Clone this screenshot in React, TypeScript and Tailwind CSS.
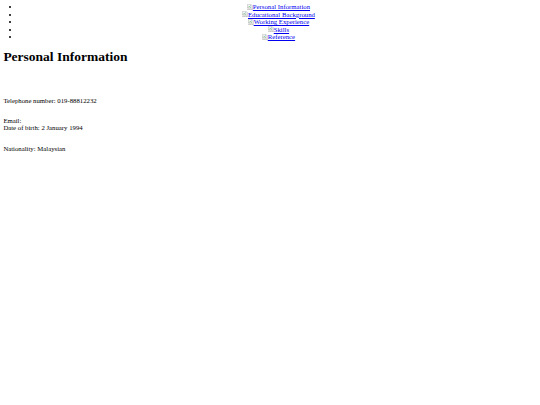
const navItems = [
  "Personal Information",
  "Educational Background",
  "Working Experience",
  "Skills",
  "Reference",
];

const BrokenImage = () => (
  <svg
    viewBox="0 0 16 16"
    className="inline-block w-[6px] h-[6px] align-[-0.5px]"
  >
    <path d="M1 1h10l4 4v4l-3 2-3-2-3 2-3-2-2 1z" fill="#f4f4f4" stroke="#9a9a9a" strokeWidth="1" />
    <path d="M1 13l2-1 3 2 3-2 3 2 3-2v3H1z" fill="#f4f4f4" stroke="#9a9a9a" strokeWidth="1" />
    <path d="M3 9l3-3 3 3 2-2" fill="none" stroke="#4caf50" strokeWidth="1.5" />
    <circle cx="10" cy="4.5" r="1.2" fill="#4a90d9" />
  </svg>
);

export default function App() {
  return (
    <div className="min-h-[405px] bg-white text-black p-[3.375px] font-['Liberation_Serif',_'Times_New_Roman',_serif] text-[6.75px] leading-[7.75px]">
      <ul className="list-disc pl-[16.875px] text-center">
        {navItems.map((item) => (
          <li key={item} className="h-[7.5px] leading-[7.5px]">
            <a href="#" className="text-[#0000EE] underline">
              <BrokenImage />
              {item}
            </a>
          </li>
        ))}
      </ul>

      <h1 className="font-bold text-[13.5px] leading-[15.5px] mt-[8.5px] mb-[9px]">
        Personal Information
      </h1>

      <div className="mt-[32px]">
        <p>Telephone number: 019-88812232</p>
        <p className="mt-[12px]">Email:</p>
        <p>Date of birth: 2 January 1994</p>
        <p className="mt-[12.5px]">Nationality: Malaysian</p>
      </div>
    </div>
  );
}
